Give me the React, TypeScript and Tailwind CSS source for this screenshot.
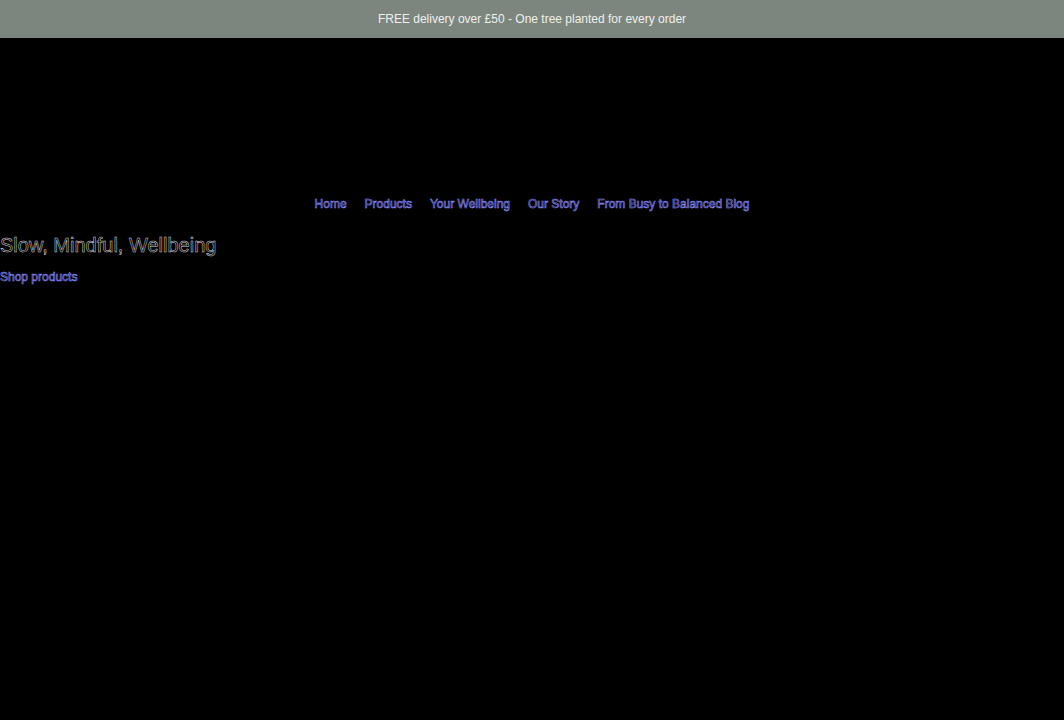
const NAV = ["Home", "Products", "Your Wellbeing", "Our Story", "From Busy to Balanced Blog"];

export default function App() {
  return (
    <div className="min-h-[720px] bg-black font-['Liberation_Sans',Arial,sans-serif]">
      {/* Announcement bar */}
      <div className="flex h-[38px] items-center justify-center bg-[#7d867e] text-[12px] text-[#eef0ec]">
        FREE delivery over £50 - One tree planted for every order
      </div>

      {/* Header spacer + nav */}
      <nav className="flex justify-center gap-[18px] pt-[158px] text-[12px] leading-4">
        {NAV.map((item) => (
          <a
            key={item}
            href="#"
            className="text-transparent [-webkit-text-stroke:0.6px_#8c8cff]"
          >
            {item}
          </a>
        ))}
      </nav>

      {/* Hero */}
      <h1 className="mt-[21px] text-[20px] leading-6 text-transparent [-webkit-text-stroke:0.5px_#d8d8d8]">
        Slow, Mindful, Wellbeing
      </h1>
      <a
        href="#"
        className="mt-[12px] block text-[12px] leading-4 text-transparent [-webkit-text-stroke:0.6px_#8c8cff]"
      >
        Shop products
      </a>
    </div>
  );
}
